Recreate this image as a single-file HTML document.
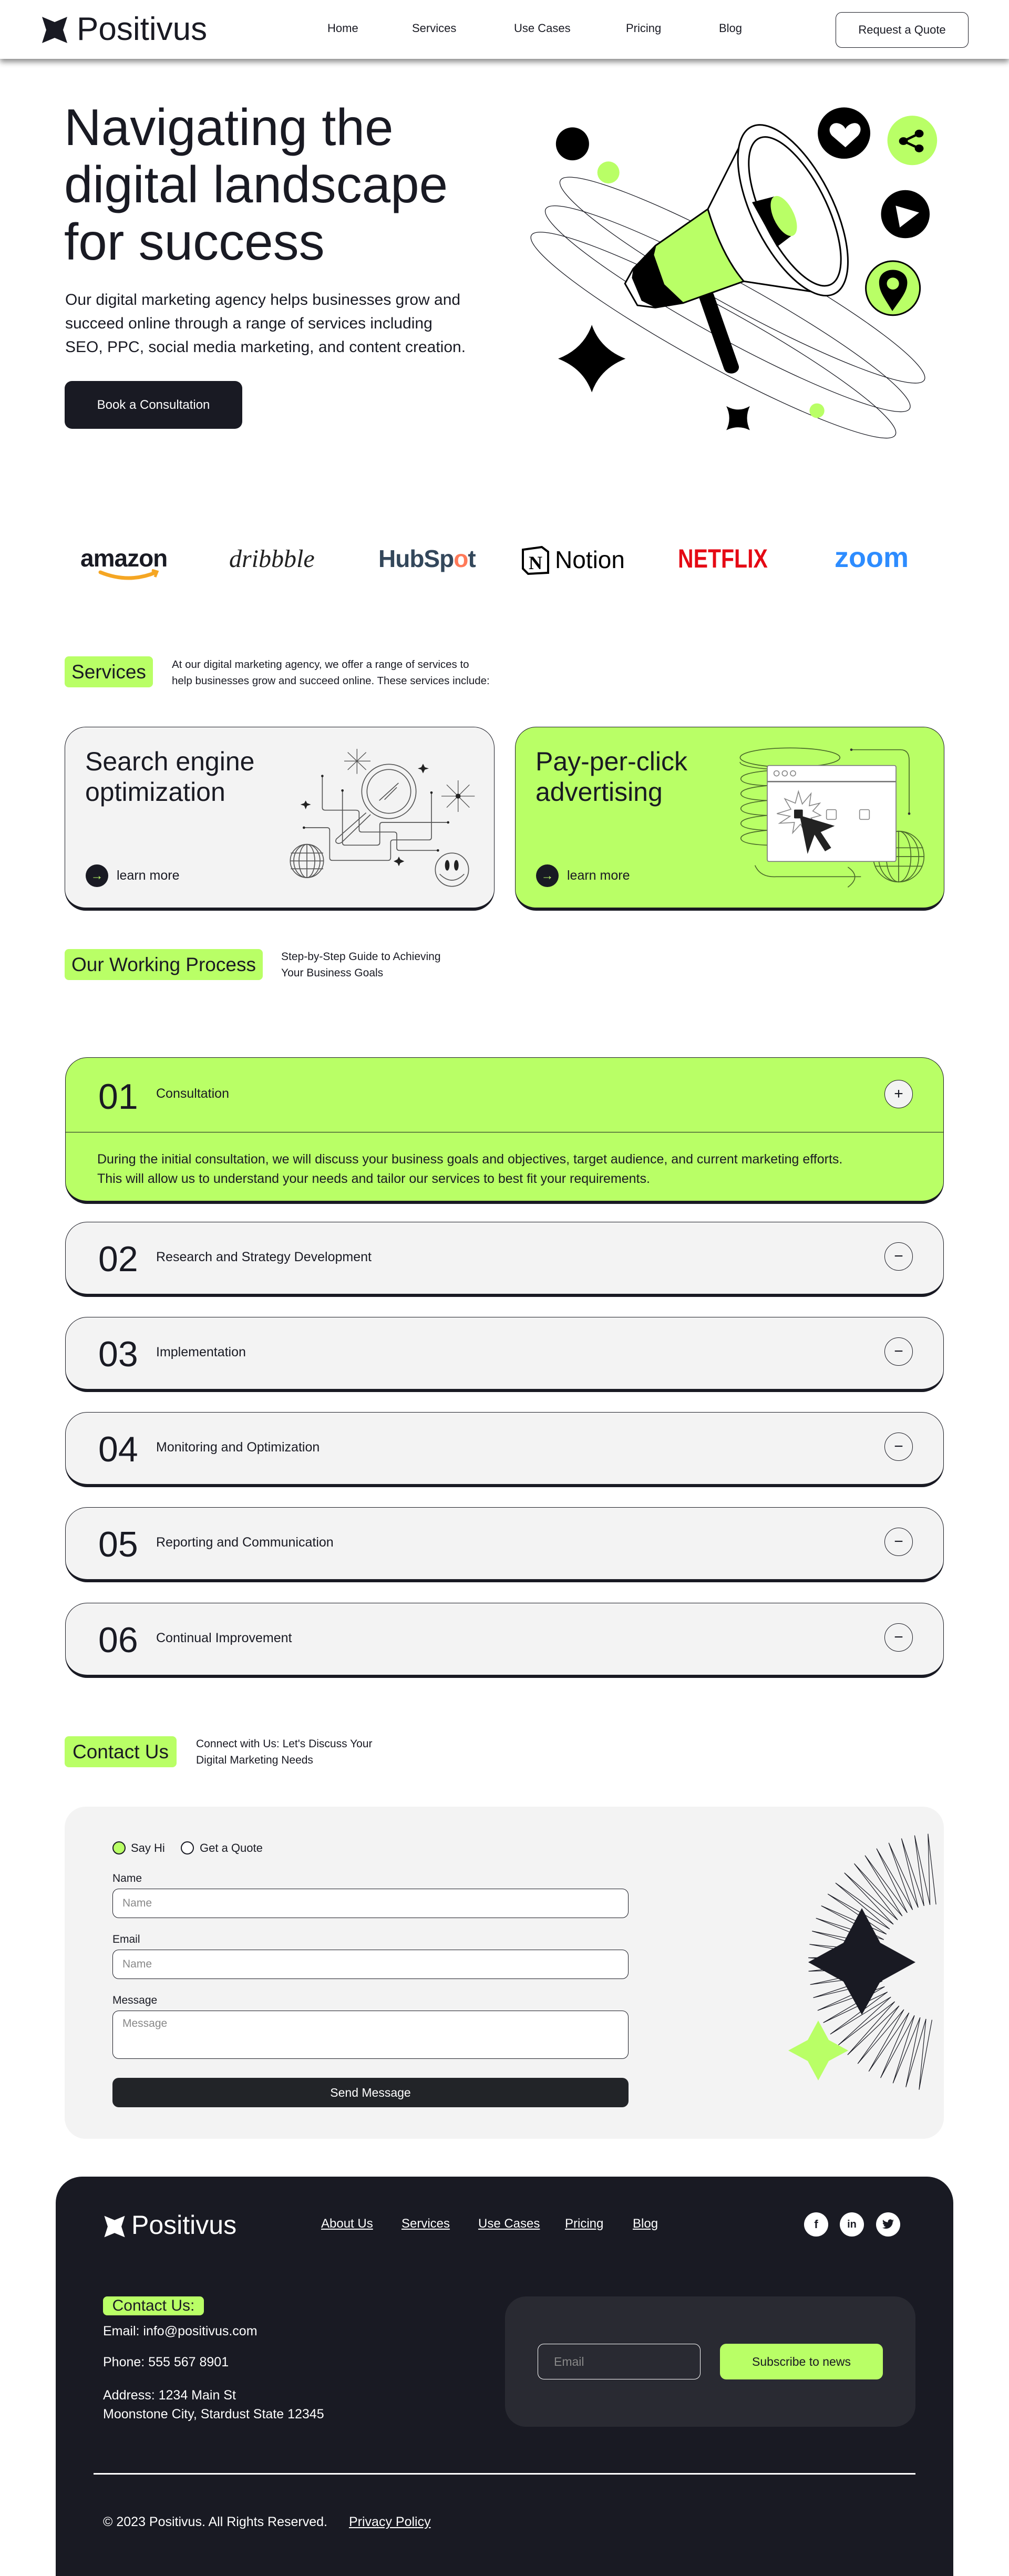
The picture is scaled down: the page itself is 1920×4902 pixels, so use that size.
<!DOCTYPE html>
<html><head><meta charset="utf-8">
<style>
*{margin:0;padding:0;box-sizing:border-box}
body{width:1920px;height:4888px;position:relative;background:#fff;font-family:"Liberation Sans",sans-serif;color:#191A23;overflow:hidden}
.a{position:absolute}
.tag{position:absolute;background:#B9FF66;border-radius:8px;color:#191A23;white-space:nowrap;display:flex;align-items:center;justify-content:center}
.card{position:absolute;border:1px solid #191A23;border-bottom:6px solid #191A23;border-radius:40px}
.acc{position:absolute;left:124px;width:1672px;border:1px solid #191A23;border-bottom:6px solid #191A23;border-radius:42px;background:#F3F3F3}
.num{position:absolute;left:62px;font-size:68px;line-height:1}
.at{position:absolute;left:172px;font-size:25px}
.pm{position:absolute;right:58px;width:54px;height:54px;border:1.5px solid #191A23;border-radius:50%;background:#F3F3F3;font-size:30px;display:flex;align-items:center;justify-content:center}
.lbl{position:absolute;left:214px;font-size:21px}
.inp{position:absolute;left:214px;width:982px;border:1px solid #191A23;border-radius:12px;background:#fff;font-size:21px;color:#888;padding-left:18px}
.fl{position:absolute;color:#fff;font-size:24px;text-decoration:underline;top:4218px}
.soc{position:absolute;top:4210px;width:46px;height:46px;border-radius:50%;background:#fff;display:flex;align-items:center;justify-content:center;color:#191A23;font-weight:bold;font-size:22px}
.ft{position:absolute;left:196px;font-size:25px;color:#fff}
</style></head><body>

<!-- Header -->
<div class="a" style="left:0;top:0;width:1920px;height:112px;background:#fff;box-shadow:0 6px 10px rgba(0,0,0,.45);z-index:2">
 <svg class="a" style="left:78px;top:30px" width="52" height="54" viewBox="0 0 52 54"><path d="M2 2 L26 12 L50 2 L42 27 L50 52 L26 42 L2 52 L10 27Z" fill="#191A23"/></svg>
 <div class="a" style="left:146px;top:22px;font-size:62px;line-height:68px">Positivus</div>
 <div class="a" style="left:623px;top:41px;font-size:22px">Home</div>
 <div class="a" style="left:784px;top:41px;font-size:22px">Services</div>
 <div class="a" style="left:978px;top:41px;font-size:22px">Use Cases</div>
 <div class="a" style="left:1191px;top:41px;font-size:22px">Pricing</div>
 <div class="a" style="left:1368px;top:41px;font-size:22px">Blog</div>
 <div class="a" style="left:1590px;top:23px;width:253px;height:68px;border:1px solid #191A23;border-radius:12px;font-size:22px;display:flex;align-items:center;justify-content:center">Request a Quote</div>
</div>

<!-- Hero -->
<div class="a" style="left:122px;top:188px;font-size:98px;line-height:109px;width:1000px">Navigating the<br>digital landscape<br>for success</div>
<div class="a" style="left:124px;top:548px;font-size:30px;line-height:45px;width:900px">Our digital marketing agency helps businesses grow and<br>succeed online through a range of services including<br>SEO, PPC, social media marketing, and content creation.</div>
<div class="a" style="left:123px;top:725px;width:338px;height:91px;background:#191A23;border-radius:14px;color:#fff;font-size:24px;display:flex;align-items:center;justify-content:center">Book a Consultation</div>

<svg class="a" style="left:1000px;top:180px" width="820" height="680" viewBox="0 0 1560 1560" preserveAspectRatio="none">
 <g fill="none" stroke="#191A23" stroke-width="1.3">
  <ellipse cx="785" cy="810" rx="790" ry="120" transform="rotate(33.7 785 810)" vector-effect="non-scaling-stroke"/>
  <ellipse cx="732" cy="935" rx="790" ry="120" transform="rotate(33.7 732 935)" vector-effect="non-scaling-stroke"/>
  <ellipse cx="680" cy="1050" rx="790" ry="120" transform="rotate(33.7 680 1050)" vector-effect="non-scaling-stroke"/>
 </g>
 <ellipse cx="170" cy="215" rx="60" ry="72" fill="#000"/>
 <ellipse cx="300" cy="340" rx="40" ry="48" fill="#B9FF66"/>
 <ellipse cx="1153" cy="168" rx="95" ry="112" fill="#000"/>
 <path d="M1158 230 L1110 180 C1090 155 1105 120 1130 125 C1145 128 1155 140 1158 150 C1162 140 1172 128 1187 125 C1212 120 1222 155 1203 180Z" fill="#fff"/>
 <ellipse cx="1400" cy="200" rx="90" ry="108" fill="#B9FF66"/>
 <g fill="#000"><ellipse cx="1368" cy="203" rx="16" ry="17"/><ellipse cx="1425" cy="170" rx="16" ry="17"/><ellipse cx="1425" cy="235" rx="16" ry="17"/></g>
 <path d="M1368 203 L1425 170 M1368 203 L1425 235" stroke="#000" stroke-width="10"/>
 <ellipse cx="1375" cy="522" rx="88" ry="105" fill="#000"/>
 <path d="M1340 485 L1425 515 L1355 580Z" fill="#fff"/>
 <ellipse cx="1330" cy="845" rx="98" ry="118" fill="#B9FF66" stroke="#000" stroke-width="3" vector-effect="non-scaling-stroke"/>
 <path d="M1328 945 C1300 890 1280 860 1280 820 C1280 785 1302 765 1330 765 C1358 765 1382 785 1382 820 C1382 860 1360 890 1328 945Z" fill="#000"/>
 <ellipse cx="1330" cy="825" rx="22" ry="26" fill="#B9FF66"/>
 <path d="M240 1005 Q270 1110 362 1153 Q270 1196 240 1300 Q210 1196 118 1153 Q210 1110 240 1005Z" fill="#000"/>
 <path d="M727 1360 Q770 1390 812 1360 Q792 1412 812 1465 Q770 1440 727 1465 Q748 1412 727 1360Z" fill="#000"/>
 <ellipse cx="1055" cy="1380" rx="27" ry="32" fill="#B9FF66"/>
 <path d="M655 880 L745 1190" stroke="#000" stroke-width="55" stroke-linecap="round"/>
 <path d="M775 225 L660 500 L470 660 L390 760 L360 825 L405 920 L470 930 L570 910 L790 815 L1090 870 Z" fill="#fff" stroke="#000" stroke-width="3" vector-effect="non-scaling-stroke"/>
 <path d="M660 500 L470 660 L462 700 L500 830 L570 910 L790 815 C730 730 690 620 660 500Z" fill="#B9FF66" stroke="#000" stroke-width="3" vector-effect="non-scaling-stroke"/>
 <path d="M470 660 L390 760 L385 800 L420 900 L470 930 L570 910 L500 830 L462 700Z" fill="#000"/>
 <ellipse cx="968" cy="505" rx="395" ry="150" transform="rotate(69 968 505)" fill="#fff" stroke="#000" stroke-width="3" vector-effect="non-scaling-stroke"/>
 <ellipse cx="975" cy="510" rx="345" ry="120" transform="rotate(69 975 510)" fill="none" stroke="#000" stroke-width="3" vector-effect="non-scaling-stroke"/>
 <path d="M820 470 L900 445 L975 605 L910 665Z" fill="#000"/>
 <ellipse cx="935" cy="530" rx="38" ry="92" transform="rotate(-20 935 530)" fill="#B9FF66"/>
</svg>

<!-- Logos -->
<div class="a" style="left:153px;top:1035px;font-size:46px;font-weight:bold;letter-spacing:-1px">amazon</div>
<svg class="a" style="left:185px;top:1083px" width="120" height="28" viewBox="0 0 120 28"><path d="M6 6 Q60 28 112 6" stroke="#F5A623" stroke-width="7" fill="none" stroke-linecap="round"/><path d="M104 2 L114 5 L110 15" stroke="#F5A623" stroke-width="5" fill="none"/></svg>
<div class="a" style="left:436px;top:1036px;font-size:48px;font-family:'Liberation Serif',serif;font-style:italic;color:#222">dribbble</div>
<div class="a" style="left:720px;top:1036px;font-size:46px;color:#33475B;font-weight:bold;letter-spacing:-1px">HubSp<span style="color:#FF7A59">o</span>t</div>
<svg class="a" style="left:991px;top:1038px" width="60" height="56" viewBox="0 0 60 56"><path d="M4 8 L40 3 L52 12 L52 52 L14 54 L4 44Z" fill="#fff" stroke="#000" stroke-width="4"/><text x="15" y="45" font-family="Liberation Serif" font-weight="bold" font-size="36">N</text></svg>
<div class="a" style="left:1056px;top:1038px;font-size:46px;color:#000">Notion</div>
<div class="a" style="left:1290px;top:1034px;font-size:50px;color:#E50914;font-weight:bold;transform:scaleX(.82);transform-origin:left">NETFLIX</div>
<div class="a" style="left:1588px;top:1030px;font-size:54px;color:#2D8CFF;font-weight:bold">zoom</div>

<!-- Services -->
<div class="tag" style="left:123px;top:1249px;width:168px;height:59px;font-size:37px">Services</div>
<div class="a" style="left:327px;top:1249px;font-size:20.5px;line-height:31px">At our digital marketing agency, we offer a range of services to<br>help businesses grow and succeed online. These services include:</div>

<div class="card" style="left:123px;top:1383px;width:818px;height:350px;background:#F3F3F3">
 <div class="a" style="left:38px;top:36px;font-size:50px;line-height:58px">Search engine<br>optimization</div>
 <div class="a" style="left:39px;top:261px;width:43px;height:43px;border-radius:50%;background:#191A23;color:#B9FF66;font-size:24px;display:flex;align-items:center;justify-content:center">→</div>
 <div class="a" style="left:98px;top:268px;font-size:25px">learn more</div>
</div>
<svg class="a" style="left:540px;top:1400px" width="380" height="300" viewBox="0 0 1140 900">
 <g fill="none" stroke="#555" stroke-width="5">
  <circle cx="600" cy="318" r="155"/><circle cx="600" cy="318" r="125"/>
  <path d="M545 370 L655 270 M575 365 L645 295"/>
  <path d="M470 440 L300 590 Q290 610 310 615 Q325 615 335 605 L495 450"/>
  <path d="M220 230 L220 410 Q220 425 235 425 L410 425 Q430 425 430 440 L430 535 Q430 550 445 550 L630 550 Q645 550 645 565 L645 640 Q645 655 660 655 L880 655"/>
  <path d="M335 310 L335 610 Q335 625 350 625 L530 625 Q548 625 548 610 L548 510 Q548 495 563 495 L938 495"/>
  <path d="M843 325 L843 580 Q843 595 828 595 L625 595 Q610 595 610 610 L610 695 Q610 712 595 712 L278 712 Q262 712 262 697 L262 540 Q262 525 247 525 L115 525"/>
  <path d="M418 75 L418 218 M345 145 L495 145 M365 95 L470 195 M470 95 L365 195" stroke-width="4"/>
  <path d="M995 255 L995 435 M900 345 L1090 345 M930 280 L1060 410 M1060 280 L930 410" stroke-width="4"/>
  <circle cx="960" cy="765" r="95"/><path d="M890 790 Q960 860 1030 790"/>
  <circle cx="132" cy="715" r="95"/><ellipse cx="132" cy="715" rx="45" ry="95"/><ellipse cx="132" cy="715" rx="75" ry="95"/><path d="M132 620 L132 810 M40 670 L225 670 M37 715 L227 715 M40 760 L225 760"/>
 </g>
 <g fill="#222"><ellipse cx="933" cy="740" rx="13" ry="30"/><ellipse cx="985" cy="740" rx="13" ry="30"/><circle cx="995" cy="345" r="14"/>
  <path d="M795 160 L805 180 L828 187 L805 194 L795 215 L785 194 L765 187 L785 180Z"/><path d="M125 370 L133 385 L155 393 L133 400 L125 420 L117 400 L95 393 L117 385Z"/><path d="M657 690 L665 706 L688 717 L665 727 L657 745 L649 727 L627 717 L649 706Z"/>
  <circle cx="220" cy="230" r="7"/><circle cx="335" cy="313" r="7"/><circle cx="843" cy="325" r="7"/><circle cx="938" cy="495" r="7"/><circle cx="880" cy="655" r="7"/><circle cx="115" cy="525" r="7"/></g>
</svg>

<div class="card" style="left:980px;top:1383px;width:817px;height:350px;background:#B9FF66">
 <div class="a" style="left:38px;top:36px;font-size:50px;line-height:58px">Pay-per-click<br>advertising</div>
 <div class="a" style="left:39px;top:261px;width:43px;height:43px;border-radius:50%;background:#191A23;color:#B9FF66;font-size:24px;display:flex;align-items:center;justify-content:center">→</div>
 <div class="a" style="left:98px;top:268px;font-size:25px">learn more</div>
</div>
<svg class="a" style="left:1380px;top:1400px" width="400" height="300" viewBox="0 0 1200 900">
 <g fill="none" stroke="#4a6a2a" stroke-width="5">
  <ellipse cx="370" cy="125" rx="285" ry="55"/>
  <path d="M240 200 Q80 215 90 250 Q100 280 240 285 M240 285 Q80 300 90 335 Q100 365 240 370 M240 370 Q80 385 90 420 Q100 450 240 455 M240 455 Q80 470 90 505 Q100 535 240 540 M240 540 Q80 555 90 590 Q100 620 240 625 M240 190 Q80 175 85 150"/>
  <path d="M720 80 L1000 80 Q1050 80 1050 140 L1050 445"/>
  <path d="M170 740 Q200 810 290 805 L775 805 M700 750 Q780 805 700 865"/>
  <circle cx="990" cy="690" r="145"/><ellipse cx="990" cy="690" rx="70" ry="145"/><ellipse cx="990" cy="690" rx="115" ry="145"/><path d="M990 545 L990 835 M850 640 L1130 640 M845 690 L1135 690 M855 745 L1125 745"/>
 </g>
 <g fill="#333"><circle cx="720" cy="80" r="7"/><circle cx="1050" cy="445" r="7"/></g>
 <rect x="240" y="170" width="735" height="548" rx="10" fill="#fff" stroke="#777" stroke-width="5"/>
 <path d="M240 262 L975 262" stroke="#777" stroke-width="8"/>
 <g fill="none" stroke="#888" stroke-width="5"><circle cx="293" cy="215" r="15"/><circle cx="340" cy="215" r="15"/><circle cx="387" cy="215" r="15"/>
  <rect x="578" y="422" width="56" height="56" rx="8"/><rect x="767" y="422" width="56" height="56" rx="8"/>
  <path d="M418 318 L440 390 L490 330 L480 400 L540 385 L500 430 L545 455 L490 470 L530 520 L470 500 L460 560 L430 505 L385 555 L395 495 L310 500 L370 460 L295 445 L375 420 L340 360 L400 385Z"/></g>
 <rect x="393" y="422" width="50" height="50" rx="5" fill="#222"/>
 <path d="M425 455 L625 515 L545 550 L605 640 L570 660 L510 565 L470 675Z" fill="#222"/>
</svg>

<!-- Working process -->
<div class="tag" style="left:123px;top:1806px;width:377px;height:59px;font-size:37px">Our Working Process</div>
<div class="a" style="left:535px;top:1805px;font-size:21px;line-height:31px">Step-by-Step Guide to Achieving<br>Your Business Goals</div>

<div class="acc" style="top:2012px;height:279px;background:#B9FF66">
 <div class="num" style="top:40px">01</div>
 <div class="at" style="top:54px">Consultation</div>
 <div class="pm" style="top:42px">+</div>
 <div class="a" style="left:0;top:141px;width:100%;height:1px;background:#191A23"></div>
 <div class="a" style="left:60px;top:175px;font-size:25px;line-height:37px;white-space:nowrap">During the initial consultation, we will discuss your business goals and objectives, target audience, and current marketing efforts.<br>This will allow us to understand your needs and tailor our services to best fit your requirements.</div>
</div>
<div class="acc" style="top:2325px;height:143px"><div class="num" style="top:36px">02</div><div class="at" style="top:52px">Research and Strategy Development</div><div class="pm" style="top:38px">−</div></div>
<div class="acc" style="top:2506px;height:143px"><div class="num" style="top:36px">03</div><div class="at" style="top:52px">Implementation</div><div class="pm" style="top:38px">−</div></div>
<div class="acc" style="top:2687px;height:143px"><div class="num" style="top:36px">04</div><div class="at" style="top:52px">Monitoring and Optimization</div><div class="pm" style="top:38px">−</div></div>
<div class="acc" style="top:2868px;height:143px"><div class="num" style="top:36px">05</div><div class="at" style="top:52px">Reporting and Communication</div><div class="pm" style="top:38px">−</div></div>
<div class="acc" style="top:3050px;height:143px"><div class="num" style="top:36px">06</div><div class="at" style="top:52px">Continual Improvement</div><div class="pm" style="top:38px">−</div></div>

<!-- Contact -->
<div class="tag" style="left:123px;top:3304px;width:213px;height:59px;font-size:37px">Contact Us</div>
<div class="a" style="left:373px;top:3303px;font-size:21px;line-height:31px">Connect with Us: Let's Discuss Your<br>Digital Marketing Needs</div>

<div class="a" style="left:123px;top:3438px;width:1673px;height:632px;background:#F3F3F3;border-radius:40px;overflow:hidden">
 <svg class="a" style="left:0;top:0" width="1673" height="632">
  <defs><path id="sp" d="M110 0 L244.7 12.8 L109.4 11.5" fill="none" stroke="#191A23" stroke-width="1.2"/></defs>
  <g transform="translate(1660 296)">
   <use href="#sp" transform="rotate(95)"/><use href="#sp" transform="rotate(101)"/><use href="#sp" transform="rotate(107)"/><use href="#sp" transform="rotate(113)"/><use href="#sp" transform="rotate(119)"/><use href="#sp" transform="rotate(125)"/><use href="#sp" transform="rotate(131)"/><use href="#sp" transform="rotate(137)"/><use href="#sp" transform="rotate(143)"/><use href="#sp" transform="rotate(149)"/><use href="#sp" transform="rotate(155)"/><use href="#sp" transform="rotate(161)"/><use href="#sp" transform="rotate(167)"/><use href="#sp" transform="rotate(173)"/><use href="#sp" transform="rotate(179)"/><use href="#sp" transform="rotate(185)"/><use href="#sp" transform="rotate(191)"/><use href="#sp" transform="rotate(197)"/><use href="#sp" transform="rotate(203)"/><use href="#sp" transform="rotate(209)"/><use href="#sp" transform="rotate(215)"/><use href="#sp" transform="rotate(221)"/><use href="#sp" transform="rotate(227)"/><use href="#sp" transform="rotate(233)"/><use href="#sp" transform="rotate(239)"/><use href="#sp" transform="rotate(245)"/><use href="#sp" transform="rotate(251)"/><use href="#sp" transform="rotate(257)"/><use href="#sp" transform="rotate(263)"/>
  </g>
  <path transform="translate(1517 296)" d="M0 -103 L35 -37 L102 0 L35 37 L0 100 L-35 37 L-102 0 L-35 -37Z" fill="#191A23"/>
  <path transform="translate(1434 464)" d="M0 -57 L20 -20 L57 0 L20 20 L0 57 L-20 20 L-57 0 L-20 -20Z" fill="#B9FF66"/>
 </svg>
</div>
<div class="a" style="left:214px;top:3504px;width:25px;height:25px;border:2px solid #191A23;border-radius:50%;background:#B9FF66"></div>
<div class="a" style="left:249px;top:3504px;font-size:22px">Say Hi</div>
<div class="a" style="left:344px;top:3504px;width:25px;height:25px;border:2px solid #191A23;border-radius:50%;background:#fff"></div>
<div class="a" style="left:380px;top:3504px;font-size:22px">Get a Quote</div>
<div class="lbl" style="top:3563px">Name</div>
<div class="inp" style="top:3594px;height:56px;line-height:54px">Name</div>
<div class="lbl" style="top:3679px">Email</div>
<div class="inp" style="top:3710px;height:56px;line-height:54px">Name</div>
<div class="lbl" style="top:3795px">Message</div>
<div class="inp" style="top:3826px;height:92px;padding-top:12px">Message</div>
<div class="a" style="left:214px;top:3954px;width:982px;height:56px;background:#222428;border-radius:12px;color:#fff;font-size:23px;display:flex;align-items:center;justify-content:center">Send Message</div>

<!-- Footer -->
<div class="a" style="left:106px;top:4142px;width:1708px;height:760px;background:#191A23;border-radius:50px 50px 0 0"></div>
<svg class="a" style="left:196px;top:4215px" width="44" height="44" viewBox="0 0 52 54"><path d="M2 2 L26 12 L50 2 L42 27 L50 52 L26 42 L2 52 L10 27Z" fill="#fff"/></svg>
<div class="a" style="left:250px;top:4206px;font-size:50px;color:#fff;line-height:56px">Positivus</div>
<div class="fl" style="left:611px">About Us</div>
<div class="fl" style="left:764px">Services</div>
<div class="fl" style="left:910px">Use Cases</div>
<div class="fl" style="left:1075px">Pricing</div>
<div class="fl" style="left:1204px">Blog</div>
<div class="soc" style="left:1530px">f</div>
<div class="soc" style="left:1598px;font-size:20px">in</div>
<div class="soc" style="left:1667px"><svg width="24" height="20" viewBox="0 0 24 20"><path d="M23 2.5c-.8.4-1.7.6-2.6.7.9-.6 1.6-1.4 2-2.5-.9.5-1.9.9-2.9 1.1C18.6.9 17.4.3 16.1.3c-2.5 0-4.5 2-4.5 4.5 0 .4 0 .7.1 1C7.9 5.6 4.6 3.8 2.4 1.1c-.4.7-.6 1.4-.6 2.3 0 1.6.8 2.9 2 3.7-.7 0-1.4-.2-2-.6v.1c0 2.200 1.6 4 3.6 4.4-.4.1-.8.2-1.2.2-.3 0-.6 0-.8-.1.6 1.8 2.2 3.1 4.2 3.1-1.5 1.2-3.5 1.9-5.6 1.9H1c2 1.3 4.4 2 6.9 2 8.3 0 12.8-6.9 12.8-12.8v-.6c.9-.6 1.7-1.4 2.3-2.3z" fill="#191A23"/></svg></div>
<div class="tag" style="left:196px;top:4370px;width:192px;height:36px;font-size:30px">Contact Us:</div>
<div class="ft" style="top:4422px">Email: info@positivus.com</div>
<div class="ft" style="top:4481px">Phone: 555 567 8901</div>
<div class="ft" style="top:4540px;line-height:36px">Address: 1234 Main St<br>Moonstone City, Stardust State 12345</div>
<div class="a" style="left:961px;top:4370px;width:781px;height:248px;background:#292A32;border-radius:40px"></div>
<div class="a" style="left:1023px;top:4460px;width:310px;height:68px;border:1px solid #fff;border-radius:12px;color:#888;font-size:23px;line-height:66px;padding-left:30px">Email</div>
<div class="a" style="left:1370px;top:4460px;width:310px;height:68px;background:#B9FF66;border-radius:12px;font-size:23px;display:flex;align-items:center;justify-content:center">Subscribe to news</div>
<div class="a" style="left:178px;top:4706px;width:1564px;height:3px;background:#fff"></div>
<div class="ft" style="top:4785px">© 2023 Positivus. All Rights Reserved.</div>
<div class="a" style="left:664px;top:4785px;font-size:25px;color:#fff;text-decoration:underline">Privacy Policy</div>
</body></html>
